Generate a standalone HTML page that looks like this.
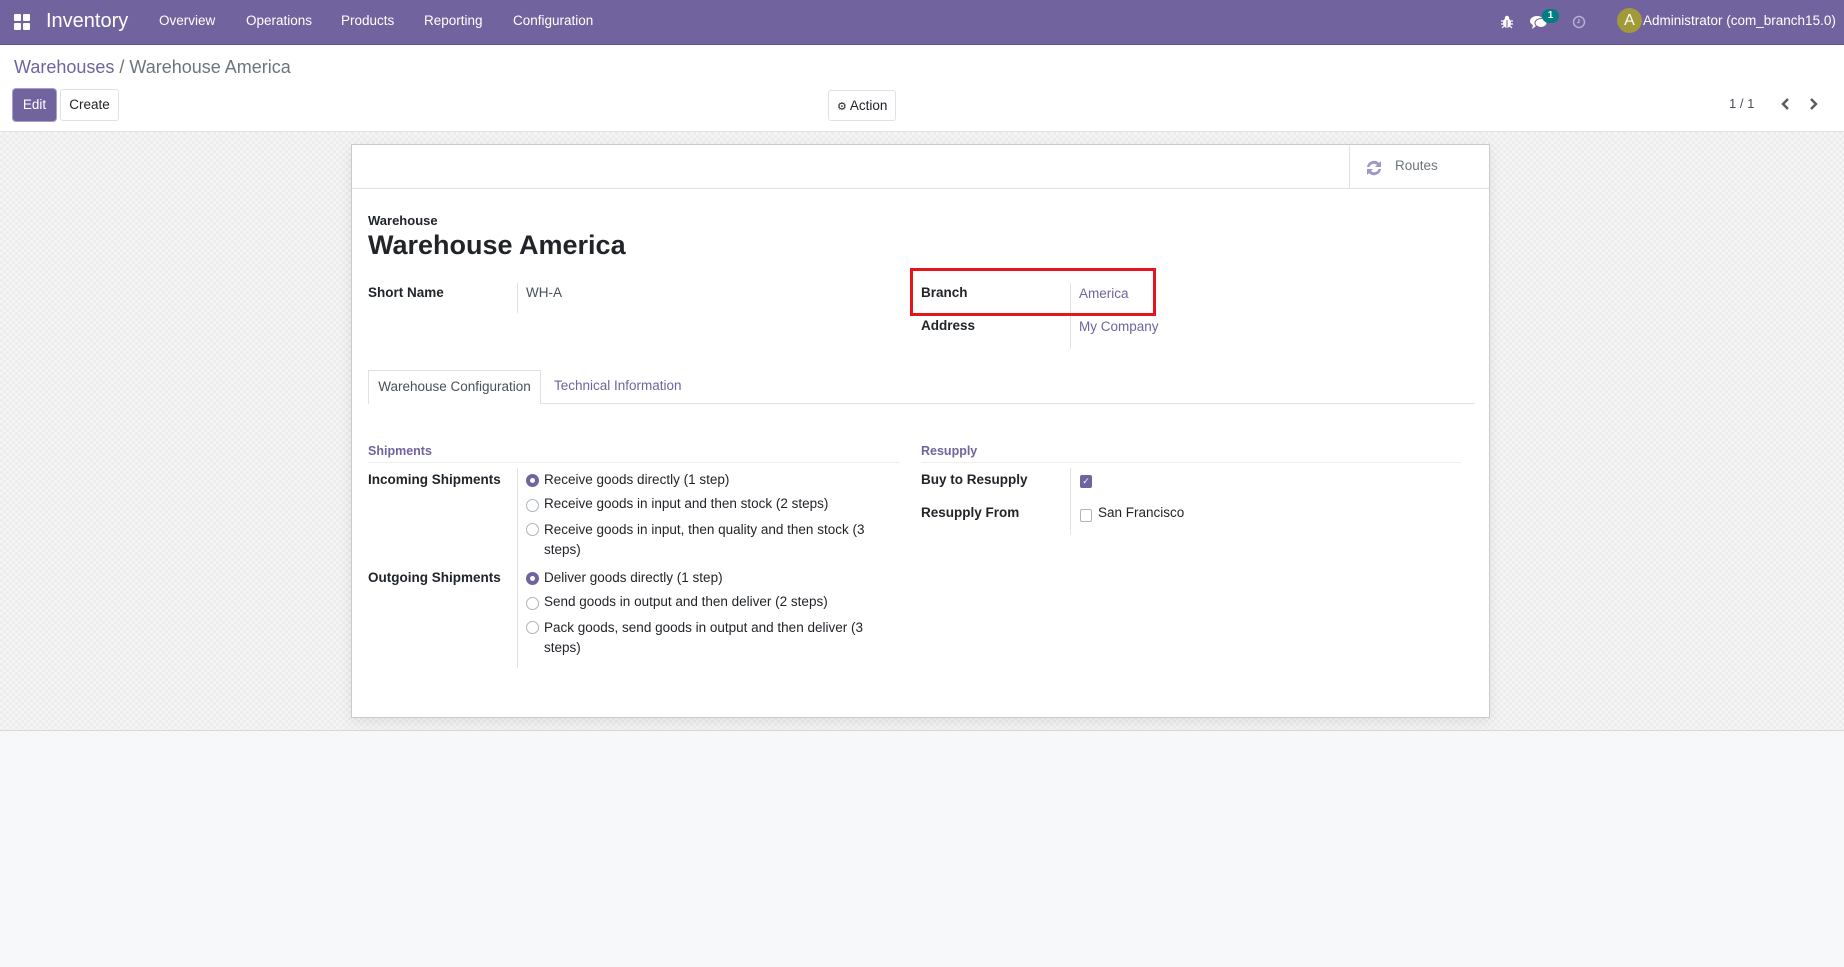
<!DOCTYPE html>
<html><head><meta charset="utf-8"><style>
*{box-sizing:border-box;margin:0;padding:0}
body{width:1844px;height:967px;overflow:hidden;background:#f7f8fa;font-family:"Liberation Sans",sans-serif;font-size:13.5px;color:#212529;position:relative}
.a{position:absolute;white-space:nowrap}
.nav{position:absolute;left:0;top:0;width:1844px;height:45px;background:#71639e;border-bottom:1px solid #5f5488}
.nav .a{color:#fff}
.cp{position:absolute;left:0;top:45px;width:1844px;height:87px;background:#fff;border-bottom:1px solid #dee2e6}
.content{position:absolute;left:0;top:132px;width:1844px;height:599px;background-color:#f5f5f5;background-image:linear-gradient(45deg,#ececec 25%,transparent 25%,transparent 75%,#ececec 75%),linear-gradient(45deg,#ececec 25%,transparent 25%,transparent 75%,#ececec 75%);background-size:6px 6px;background-position:0 0,3px 3px;border-bottom:1px solid #d8d8d8}
.sheet{position:absolute;left:351px;top:144px;width:1139px;height:574px;background:#fff;border:1px solid #c9c9d0;box-shadow:0 4px 12px rgba(0,0,0,.08)}
.lbl{font-weight:bold;color:#212529}
.lnk{color:#71639e}
.radio{position:absolute;width:13px;height:13px;border:1px solid #adb5bd;border-radius:50%;background:#fff}
.radio.on{border:4px solid #71639e;background:#fff}
.vl{position:absolute;width:1px;background:#dee2e6}
</style></head><body>
<div class="nav">
 <svg class="a" style="left:14px;top:14px" width="16" height="16"><rect x="0" y="0" width="7" height="7" rx="1" fill="#fff"/><rect x="9" y="0" width="7" height="7" rx="1" fill="#fff"/><rect x="0" y="9" width="7" height="7" rx="1" fill="#fff"/><rect x="9" y="9" width="7" height="7" rx="1" fill="#fff"/></svg>
 <div class="a" style="left:46px;top:10px;font-size:20px">Inventory</div>
 <div class="a" style="left:159px;top:13px;font-size:13.5px">Overview</div>
 <div class="a" style="left:246px;top:13px;font-size:13.5px">Operations</div>
 <div class="a" style="left:341px;top:13px;font-size:13.5px">Products</div>
 <div class="a" style="left:424px;top:13px;font-size:13.5px">Reporting</div>
 <div class="a" style="left:513px;top:13px;font-size:13.5px">Configuration</div>
 <svg class="a" style="left:1500px;top:15px" width="14" height="14" viewBox="0 0 14 14"><ellipse cx="7" cy="8" rx="4" ry="5" fill="#fff"/><circle cx="7" cy="3" r="2.2" fill="#fff"/><path d="M1 6h12M1 9h12M2 13l2-2M12 13l-2-2" stroke="#fff" stroke-width="1.2"/><path d="M7 5v8" stroke="#71639e"/></svg>
 <svg class="a" style="left:1530px;top:14px" width="18" height="16" viewBox="0 0 18 16"><ellipse cx="7" cy="7" rx="7" ry="5" fill="#fff"/><ellipse cx="11" cy="9" rx="6" ry="4.5" fill="#fff" stroke="#71639e"/><path d="M3 11l-1 4 4-3z" fill="#fff"/></svg>
 <div class="a" style="left:1542px;top:9px;width:17px;height:14px;border-radius:7px;background:#017e84;color:#fff;font-size:10px;text-align:center;line-height:14px;font-weight:bold">1</div>
 <svg class="a" style="left:1572px;top:15px" width="14" height="14"><circle cx="7" cy="7" r="5.5" fill="none" stroke="#b7aed3" stroke-width="1.5"/><path d="M7 4v3.5h-2" stroke="#b7aed3" stroke-width="1.3" fill="none"/></svg>
 <div class="a" style="left:1617px;top:8px;width:25px;height:25px;border-radius:50%;background:#a2993b;font-size:16px;text-align:center;line-height:25px">A</div>
 <div class="a" style="left:1643px;top:13px;font-size:13.5px">Administrator (com_branch15.0)</div>
</div>
<div class="cp">
 <div class="a" style="left:14px;top:12px;font-size:18px;color:#71639e">Warehouses <span style="color:#6c757d">/ Warehouse America</span></div>
 <div class="a" style="left:13px;top:44px;width:43px;height:32px;background:#71639e;border-radius:3px;color:#fff;font-size:13.5px;text-align:center;line-height:32px;box-shadow:0 0 0 1px #a99fc9">Edit</div>
 <div class="a" style="left:60px;top:44px;width:59px;height:32px;border:1px solid #dee2e6;border-radius:3px;font-size:13.5px;text-align:center;line-height:30px">Create</div>
 <div class="a" style="left:828px;top:45px;width:68px;height:31px;border:1px solid #dee2e6;border-radius:3px;font-size:13.5px;line-height:29px;padding-left:8px"><span style="font-size:11px">⚙</span> Action</div>
 <div class="a" style="left:1729px;top:51px;font-size:13px;color:#495057">1 / 1</div>
 <svg class="a" style="left:1780px;top:52px" width="12" height="14"><path d="M8 2L3 7l5 5" stroke="#5a5a5a" stroke-width="2.4" fill="none"/></svg>
 <svg class="a" style="left:1807px;top:52px" width="12" height="14"><path d="M4 2l5 5-5 5" stroke="#5a5a5a" stroke-width="2.4" fill="none"/></svg>
</div>
<div class="content"></div>
<div class="sheet">
 <div class="a" style="left:0;top:43px;width:1137px;height:1px;background:#dee2e6"></div>
 <div class="a" style="left:997px;top:0;width:1px;height:43px;background:#dee2e6"></div>
 <svg class="a" style="left:1012px;top:13px" width="20" height="20" viewBox="0 0 20 20"><path d="M3 9a7 7 0 0 1 12-4l2-2v6h-6l2-2a4.5 4.5 0 0 0-7.5 2z" fill="#9f97c5"/><path d="M17 11a7 7 0 0 1-12 4l-2 2v-6h6l-2 2a4.5 4.5 0 0 0 7.5-2z" fill="#9f97c5"/></svg>
 <div class="a" style="left:1043px;top:13px;font-size:13.5px;color:#6c757d">Routes</div>

 <div class="a lbl" style="left:16px;top:68px;font-size:13px">Warehouse</div>
 <div class="a" style="left:16px;top:85px;font-size:27px;font-weight:bold">Warehouse America</div>

 <div class="a lbl" style="left:16px;top:140px">Short Name</div>
 <div class="vl" style="left:165px;top:138px;height:30px"></div>
 <div class="a" style="left:174px;top:140px;color:#495057">WH-A</div>

 <div class="a lbl" style="left:569px;top:140px">Branch</div>
 <div class="vl" style="left:718px;top:138px;height:66px"></div>
 <div class="a lnk" style="left:727px;top:141px">America</div>
 <div class="a lbl" style="left:569px;top:173px">Address</div>
 <div class="a lnk" style="left:727px;top:174px">My Company</div>
 <div class="a" style="left:558px;top:123px;width:246px;height:48px;border:3px solid #e8141b"></div>

 <div class="a" style="left:16px;top:258px;width:1107px;height:1px;background:#dee2e6"></div>
 <div class="a" style="left:16px;top:225px;width:173px;height:34px;border:1px solid #dee2e6;border-bottom:none;background:#fff;color:#495057;text-align:center;line-height:32px">Warehouse Configuration</div>
 <div class="a lnk" style="left:202px;top:233px">Technical Information</div>

 <div class="a lnk" style="left:16px;top:299px;font-size:12.5px;font-weight:bold">Shipments</div>
 <div class="a" style="left:16px;top:317px;width:532px;height:1px;background:#eee"></div>
 <div class="a lnk" style="left:569px;top:299px;font-size:12.5px;font-weight:bold">Resupply</div>
 <div class="a" style="left:569px;top:317px;width:540px;height:1px;background:#eee"></div>

 <div class="a lbl" style="left:16px;top:327px">Incoming Shipments</div>
 <div class="vl" style="left:165px;top:323px;height:200px"></div>
 <div class="radio on" style="left:174px;top:329px"></div><div class="a" style="left:192px;top:327px">Receive goods directly (1 step)</div>
 <div class="radio" style="left:174px;top:354px"></div><div class="a" style="left:192px;top:351px">Receive goods in input and then stock (2 steps)</div>
 <div class="radio" style="left:174px;top:378px"></div><div class="a" style="left:192px;top:375px;line-height:20px">Receive goods in input, then quality and then stock (3<br>steps)</div>

 <div class="a lbl" style="left:16px;top:425px">Outgoing Shipments</div>
 <div class="radio on" style="left:174px;top:427px"></div><div class="a" style="left:192px;top:425px">Deliver goods directly (1 step)</div>
 <div class="radio" style="left:174px;top:452px"></div><div class="a" style="left:192px;top:449px">Send goods in output and then deliver (2 steps)</div>
 <div class="radio" style="left:174px;top:476px"></div><div class="a" style="left:192px;top:473px;line-height:20px">Pack goods, send goods in output and then deliver (3<br>steps)</div>

 <div class="a lbl" style="left:569px;top:327px">Buy to Resupply</div>
 <div class="vl" style="left:718px;top:323px;height:66px"></div>
 <div class="a" style="left:728px;top:330px;width:12px;height:13px;background:#71639e;border-radius:2px;color:#fff;font-size:9px;text-align:center;line-height:13px">✓</div>
 <div class="a lbl" style="left:569px;top:360px">Resupply From</div>
 <div class="a" style="left:728px;top:364px;width:12px;height:13px;border:1px solid #adb5bd;border-radius:2px"></div>
 <div class="a" style="left:746px;top:360px">San Francisco</div>
</div>
</body></html>
